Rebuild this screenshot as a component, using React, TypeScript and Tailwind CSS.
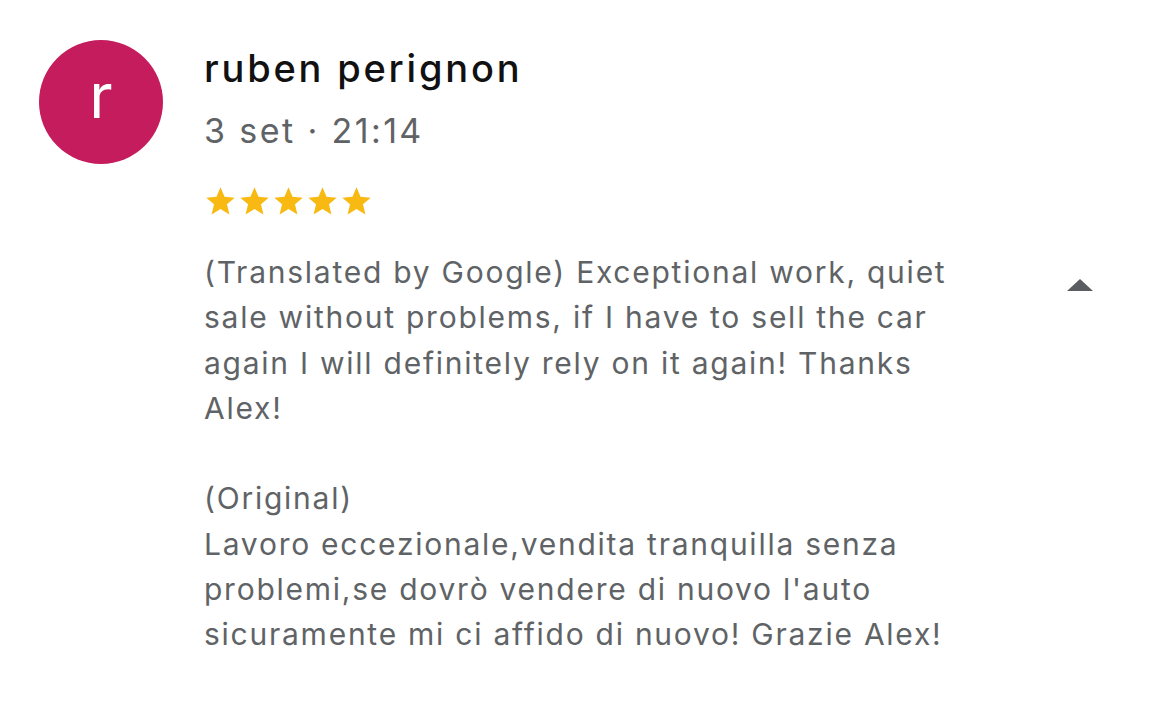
import React from "react";

const translated = [
    "(Translated by Google) Exceptional work, quiet",
    "sale without problems, if I have to sell the car",
    "again I will definitely rely on it again! Thanks",
    "Alex!",
];

const original = [
    "(Original)",
    "Lavoro eccezionale,vendita tranquilla senza",
    "problemi,se dovrò vendere di nuovo l'auto",
    "sicuramente mi ci affido di nuovo! Grazie Alex!",
];

function Star() {
    return (
        <svg viewBox="0 0 24 24" className="w-[31px] h-[31px] mr-[3px]" fill="#f7b912">
            <path d="M12 1l3.1 7.4 7.9.6-6 5.2 1.9 7.8L12 17.8 5.1 22l1.9-7.8-6-5.2 7.9-.6z" />
        </svg>
    );
}

export default function App() {
    return (
        <div className="w-[1170px] h-[702px] bg-white flex font-['Inter',sans-serif] overflow-hidden">
            {/* avatar */}
            <div className="pl-[39px] pt-[40px]">
                <div className="w-[124px] h-[124px] rounded-full bg-[#c41c5c] flex items-center justify-center">
                    <span className="text-white text-[62px] leading-none -mt-[12px]">r</span>
                </div>
            </div>

            {/* review body */}
            <div className="pl-[41px] pt-[44px] flex-1">
                <div className="text-[38px] leading-[48px] text-[#111] font-medium tracking-[2.8px]">ruben perignon</div>
                <div className="text-[34px] leading-[44px] text-[#606366] mt-[17px] tracking-[2.4px]">3 set · 21:14</div>
                <div className="flex mt-[33px] ml-[1px]">
                    {[0, 1, 2, 3, 4].map((i) => (
                        <Star key={i} />
                    ))}
                </div>

                <div className="flex mt-[33px]">
                    <div className="text-[30px] leading-[45.3px] text-[#606366] w-[790px] tracking-[1.75px]">
                        {translated.map((l, i) => (
                            <div key={i} className="whitespace-nowrap">{l}</div>
                        ))}
                        <div className="h-[45.3px]" />
                        {original.map((l, i) => (
                            <div key={i} className="whitespace-nowrap">{l}</div>
                        ))}
                    </div>
                    <div className="pl-[72px] pt-[28px]">
                        <svg width="28" height="14" viewBox="0 0 28 14">
                            <path d="M14 1L27 13H1z" fill="#5a5e63" />
                        </svg>
                    </div>
                </div>
            </div>
        </div>
    );
}
